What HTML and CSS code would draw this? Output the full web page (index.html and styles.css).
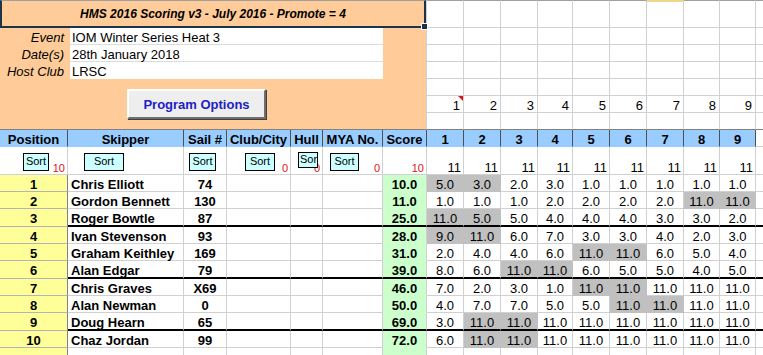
FILE: index.html
```html
<!DOCTYPE html>
<html lang="en">
<head>
    <meta charset="UTF-8">
    <title>HMS 2016 Scoring</title>
    <link rel="stylesheet" href="styles.css">
</head>
<body>
<div class="sheet">
    <!-- Event panel -->
    <div class="panel">
        <div class="title">HMS 2016 Scoring v3 - July 2016 - Promote = 4<span class="handle"></span></div>
        <div class="field"><div class="label">Event</div><div class="value">IOM Winter Series Heat 3</div></div>
        <div class="field"><div class="label">Date(s)</div><div class="value">28th January 2018</div></div>
        <div class="field"><div class="label">Host Club</div><div class="value last">LRSC</div></div>
        <button class="prog">Program Options</button>
    </div>

    <!-- Empty sheet cells right of the panel -->
    <div class="t t1"></div><div class="t t1"></div><div class="t t1"></div><div class="t t1"></div><div class="t t1"></div><div class="t t1"></div><div class="t t1 hl"></div><div class="t t1"></div><div class="t t1"></div><div class="t t1"></div>
    <div class="t"></div><div class="t"></div><div class="t"></div><div class="t"></div><div class="t"></div><div class="t"></div><div class="t"></div><div class="t"></div><div class="t"></div><div class="t"></div>
    <div class="t"></div><div class="t"></div><div class="t"></div><div class="t"></div><div class="t"></div><div class="t"></div><div class="t"></div><div class="t"></div><div class="t"></div><div class="t"></div>
    <div class="t"></div><div class="t"></div><div class="t"></div><div class="t"></div><div class="t"></div><div class="t"></div><div class="t"></div><div class="t"></div><div class="t"></div><div class="t"></div>
    <div class="t"></div><div class="t"></div><div class="t"></div><div class="t"></div><div class="t"></div><div class="t"></div><div class="t"></div><div class="t"></div><div class="t"></div><div class="t"></div>
    <div class="t num">1<span class="note"></span></div><div class="t num">2</div><div class="t num">3</div><div class="t num">4</div><div class="t num">5</div><div class="t num">6</div><div class="t num">7</div><div class="t num">8</div><div class="t num">9</div><div class="t"></div>
    <div class="t t7"></div><div class="t t7"></div><div class="t t7"></div><div class="t t7"></div><div class="t t7"></div><div class="t t7"></div><div class="t t7"></div><div class="t t7"></div><div class="t t7"></div><div class="t t7"></div>

    <!-- Column headers -->
    <div class="h">Position</div><div class="h">Skipper</div><div class="h">Sail #</div><div class="h">Club/City</div><div class="h">Hull</div><div class="h">MYA No.</div><div class="h">Score</div>
    <div class="h">1</div><div class="h">2</div><div class="h">3</div><div class="h">4</div><div class="h">5</div><div class="h">6</div><div class="h">7</div><div class="h">8</div><div class="h">9</div><div class="c"></div>

    <!-- Sort buttons -->
    <div class="sr"><span class="sort s1">Sort</span><span class="red">10</span></div>
    <div class="sr"><span class="sort s2">Sort</span></div>
    <div class="sr"><span class="sort s3">Sort</span></div>
    <div class="sr"><span class="sort s4">Sort</span><span class="red">0</span></div>
    <div class="sr"><span class="red">0</span><span class="sort s5">Sort</span></div>
    <div class="sr"><span class="sort s6">Sort</span><span class="red">0</span></div>
    <div class="sr"><span class="red">10</span></div>
    <div class="sr">11</div><div class="sr">11</div><div class="sr">11</div><div class="sr">11</div><div class="sr">11</div><div class="sr">11</div><div class="sr">11</div><div class="sr">11</div><div class="sr">11</div><div class="sr"></div>

    <!-- Results -->
    <div class="c pos">1</div><div class="c name">Chris Elliott</div><div class="c sail">74</div><div class="c"></div><div class="c"></div><div class="c"></div><div class="c score">10.0</div>
    <div class="c r g">5.0</div><div class="c r g">3.0</div><div class="c r">2.0</div><div class="c r">3.0</div><div class="c r">1.0</div><div class="c r">1.0</div><div class="c r">1.0</div><div class="c r">1.0</div><div class="c r">1.0</div><div class="c"></div>

    <div class="c pos">2</div><div class="c name">Gordon Bennett</div><div class="c sail">130</div><div class="c"></div><div class="c"></div><div class="c"></div><div class="c score">11.0</div>
    <div class="c r">1.0</div><div class="c r">1.0</div><div class="c r">1.0</div><div class="c r">2.0</div><div class="c r">2.0</div><div class="c r">2.0</div><div class="c r">2.0</div><div class="c r g">11.0</div><div class="c r g">11.0</div><div class="c"></div>

    <div class="c pos">3</div><div class="c name k">Roger Bowtle</div><div class="c sail k">87</div><div class="c k"></div><div class="c k"></div><div class="c k"></div><div class="c score k">25.0</div>
    <div class="c r g k">11.0</div><div class="c r g k">5.0</div><div class="c r k">5.0</div><div class="c r k">4.0</div><div class="c r k">4.0</div><div class="c r k">4.0</div><div class="c r k">3.0</div><div class="c r k">3.0</div><div class="c r k">2.0</div><div class="c k"></div>

    <div class="c pos">4</div><div class="c name">Ivan Stevenson</div><div class="c sail">93</div><div class="c"></div><div class="c"></div><div class="c"></div><div class="c score">28.0</div>
    <div class="c r g">9.0</div><div class="c r g">11.0</div><div class="c r">6.0</div><div class="c r">7.0</div><div class="c r">3.0</div><div class="c r">3.0</div><div class="c r">4.0</div><div class="c r">2.0</div><div class="c r">3.0</div><div class="c"></div>

    <div class="c pos">5</div><div class="c name">Graham Keithley</div><div class="c sail">169</div><div class="c"></div><div class="c"></div><div class="c"></div><div class="c score">31.0</div>
    <div class="c r">2.0</div><div class="c r">4.0</div><div class="c r">4.0</div><div class="c r">6.0</div><div class="c r g">11.0</div><div class="c r g">11.0</div><div class="c r">6.0</div><div class="c r">5.0</div><div class="c r">4.0</div><div class="c"></div>

    <div class="c pos">6</div><div class="c name k">Alan Edgar</div><div class="c sail k">79</div><div class="c k"></div><div class="c k"></div><div class="c k"></div><div class="c score k">39.0</div>
    <div class="c r k">8.0</div><div class="c r k">6.0</div><div class="c r g k">11.0</div><div class="c r g k">11.0</div><div class="c r k">6.0</div><div class="c r k">5.0</div><div class="c r k">5.0</div><div class="c r k">4.0</div><div class="c r k">5.0</div><div class="c k"></div>

    <div class="c pos">7</div><div class="c name">Chris Graves</div><div class="c sail">X69</div><div class="c"></div><div class="c"></div><div class="c"></div><div class="c score">46.0</div>
    <div class="c r">7.0</div><div class="c r">2.0</div><div class="c r">3.0</div><div class="c r">1.0</div><div class="c r g">11.0</div><div class="c r g">11.0</div><div class="c r">11.0</div><div class="c r">11.0</div><div class="c r">11.0</div><div class="c"></div>

    <div class="c pos">8</div><div class="c name">Alan Newman</div><div class="c sail">0</div><div class="c"></div><div class="c"></div><div class="c"></div><div class="c score">50.0</div>
    <div class="c r">4.0</div><div class="c r">7.0</div><div class="c r">7.0</div><div class="c r">5.0</div><div class="c r">5.0</div><div class="c r g">11.0</div><div class="c r g">11.0</div><div class="c r">11.0</div><div class="c r">11.0</div><div class="c"></div>

    <div class="c pos">9</div><div class="c name k">Doug Hearn</div><div class="c sail k">65</div><div class="c k"></div><div class="c k"></div><div class="c k"></div><div class="c score k">69.0</div>
    <div class="c r k">3.0</div><div class="c r g k">11.0</div><div class="c r g k">11.0</div><div class="c r k">11.0</div><div class="c r k">11.0</div><div class="c r k">11.0</div><div class="c r k">11.0</div><div class="c r k">11.0</div><div class="c r k">11.0</div><div class="c k"></div>

    <div class="c pos">10</div><div class="c name">Chaz Jordan</div><div class="c sail">99</div><div class="c"></div><div class="c"></div><div class="c"></div><div class="c score">72.0</div>
    <div class="c r">6.0</div><div class="c r g">11.0</div><div class="c r g">11.0</div><div class="c r">11.0</div><div class="c r">11.0</div><div class="c r">11.0</div><div class="c r">11.0</div><div class="c r">11.0</div><div class="c r">11.0</div><div class="c"></div>

    <div class="c pos"></div><div class="c"></div><div class="c"></div><div class="c"></div><div class="c"></div><div class="c"></div><div class="c score"></div>
    <div class="c"></div><div class="c"></div><div class="c"></div><div class="c"></div><div class="c"></div><div class="c"></div><div class="c"></div><div class="c"></div><div class="c"></div><div class="c"></div>
</div>
</body>
</html>
```

FILE: styles.css
```css
/* Sheet */
body {
    margin: 0;
    font-family: "Liberation Sans", Arial, sans-serif;
    font-size: 13px;
    color: #000;
    background: #fff;
    overflow: hidden;
}

.sheet {
    display: grid;
    width: 796px;
    grid-template-columns: 68px 116px 43px 64px 32px 60px 44px 37px 37px 37px 35px 37px 37px 37px 36px 36px 40px;
    grid-template-rows: 28px repeat(6, 17px) 17px 28px 17px 17px 18px 17px 17px 18px 17px 17px 18px 17px 17px;
}

.sheet > div {
    box-sizing: border-box;
}

/* Event panel */
.panel {
    grid-column: 1 / 8;
    grid-row: 1 / 8;
    background: #ffcc99;
    border-right: 1px solid #d0d0d0;
    border-bottom: 1px solid #808080;
    display: flex;
    flex-direction: column;
}

.title {
    position: relative;
    height: 28px;
    box-sizing: border-box;
    border-top: 1px solid #a0a0a0;
    border-left: 2px solid #1d3448;
    border-right: 2px solid #1d3448;
    border-bottom: 2px solid #1d3448;
    padding-top: 3px;
    line-height: 21px;
    text-align: center;
    font-size: 12px;
    font-weight: bold;
    font-style: italic;
}

.handle {
    position: absolute;
    right: -4px;
    bottom: -4px;
    width: 5px;
    height: 5px;
    background: #1d3448;
    border: 1px solid #fff;
    z-index: 2;
}

.field {
    display: flex;
    height: 17px;
}

.label {
    width: 68px;
    box-sizing: border-box;
    padding: 2px 4px 0 0;
    line-height: 15px;
    text-align: right;
    font-style: italic;
}

.value {
    width: 313px;
    margin-left: 2px;
    box-sizing: border-box;
    padding: 2px 0 0 2px;
    line-height: 15px;
    background: #fff;
    border-bottom: 1px solid #dcdcdc;
}

.value.last {
    border-bottom: none;
}

.prog {
    align-self: flex-start;
    margin: 10px 0 0 127px;
    width: 139px;
    height: 30px;
    padding: 0;
    background: #eeeeee;
    border: 2px solid;
    border-color: #ffffff #6e6e6e #6e6e6e #ffffff;
    box-shadow: 1px 1px 0 #404040;
    font-family: "Liberation Sans", Arial, sans-serif;
    font-size: 13px;
    font-weight: bold;
    color: #2020c4;
}

/* Plain cells */
.t {
    border-right: 1px solid #d0d0d0;
    border-bottom: 1px solid #d0d0d0;
}

.t1 {
    border-top: 1px solid #a0a0a0;
}

.t1.hl {
    border-top: 2px solid #ecd98c;
}

.t7 {
    border-bottom-color: #808080;
}

.num {
    position: relative;
    padding: 2px 3px 0 0;
    line-height: 15px;
    text-align: right;
}

.note {
    position: absolute;
    top: 0;
    right: 0;
    border-left: 5px solid transparent;
    border-top: 5px solid #e0101c;
}

/* Header row */
.h {
    background: #99ccff;
    border-right: 1px solid #505050;
    border-bottom: 1px solid #99ccff;
    padding-top: 2px;
    line-height: 15px;
    text-align: center;
    font-weight: bold;
    white-space: nowrap;
}

/* Sort row */
.sr {
    position: relative;
    border-right: 1px solid #d0d0d0;
    border-bottom: 1px solid #d0d0d0;
    padding: 13px 2px 0 0;
    line-height: 15px;
    text-align: right;
}

.red {
    font-size: 11px;
    color: #e0101c;
}

.sort {
    position: absolute;
    top: 6px;
    height: 18px;
    box-sizing: border-box;
    border: 1px solid #000;
    background: #ccffff;
    font-size: 11px;
    line-height: 15px;
    text-align: center;
    overflow: hidden;
}

.s1 { left: 23px; width: 26px; }
.s2 { left: 16px; width: 40px; }
.s3 { left: 5px; width: 27px; }
.s4 { left: 18px; width: 30px; }
.s5 { left: 7px; top: 5px; width: 20px; height: 16px; line-height: 13px; padding-left: 1px; text-align: left; }
.s6 { left: 7px; width: 29px; }

/* Result rows */
.c {
    border-right: 1px solid #d0d0d0;
    border-bottom: 1px solid #d0d0d0;
    padding-top: 2px;
    line-height: 15px;
    white-space: nowrap;
}

.pos {
    background: #ffff99;
    border-right-color: #808080;
    border-bottom-color: #b4b4b4;
    text-align: center;
    font-weight: bold;
}

.name {
    padding-left: 3px;
    font-weight: bold;
}

.sail {
    text-align: center;
    font-weight: bold;
}

.score {
    background: #ccffcc;
    border-bottom-color: #ccffcc;
    text-align: center;
    font-weight: bold;
}

.r {
    text-align: center;
}

.g {
    background: #c0c0c0;
    border-color: #c0c0c0;
}

.k {
    border-bottom: 2px solid #000;
}
```
